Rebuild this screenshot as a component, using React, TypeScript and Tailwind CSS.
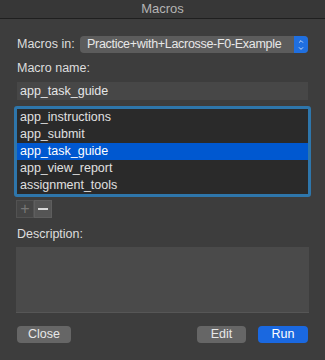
import { ChevronUp, ChevronDown } from "lucide-react";

const macros = ["app_instructions", "app_submit", "app_task_guide", "app_view_report", "assignment_tools"];

export default function App() {
  const selected = "app_task_guide";

  return (
    <div
      className="w-[325px] h-[360px] bg-[#3d3d3d] text-[12.5px] text-[#dedede] flex flex-col"
      style={{ fontFamily: '"Liberation Sans", Arial, sans-serif' }}
    >
      {/* title bar */}
      <div className="h-[19px] bg-[#373737] border-b border-[#1f1f1f] flex items-center justify-center text-[#b4b4b4] text-[13px]">
        Macros
      </div>

      <div className="flex flex-col px-[17px] pt-[17px]">
        {/* Macros in */}
        <div className="flex items-center h-[17px]">
          <span className="w-[63px]">Macros in:</span>
          <div className="flex-1 h-[17px] rounded-[4px] bg-[#5c5c5c] flex items-center overflow-hidden">
            <span className="flex-1 pl-[7px] text-[#e8e8e8] whitespace-nowrap tracking-[-0.3px]">
              Practice+with+Lacrosse-F0-Example
            </span>
            <div className="w-[14px] h-full bg-[#1f6fe0] flex flex-col items-center justify-center text-white">
              <ChevronUp className="w-[10px] h-[7px]" strokeWidth={2.5} />
              <ChevronDown className="w-[10px] h-[7px]" strokeWidth={2.5} />
            </div>
          </div>
        </div>

        <div className="mt-[8px] h-[15px] leading-[15px]">Macro name:</div>

        <div className="mt-[6px] h-[18px] bg-[#474747] flex items-center pl-[3px] text-[#e6e6e6]">app_task_guide</div>

        {/* list */}
        <div className="-mx-[3px] mt-[6px] border-[3px] border-[#2e76ab] rounded-[3px] bg-[#2a2a2a]">
          {macros.map((m) => (
            <div
              key={m}
              className={
                "h-[17px] flex items-center pl-[3px] " +
                (m === selected ? "bg-[#0058d0] text-white" : "text-[#e0e0e0]")
              }
            >
              {m}
            </div>
          ))}
        </div>

        {/* + / - */}
        <div className="mt-[3px] flex ml-[-1px]">
          <div className="w-[18px] h-[18px] bg-[#454545] border border-[#525252] flex items-center justify-center text-[#777] text-[16px] leading-none">
            +
          </div>
          <div className="w-[18px] h-[18px] bg-[#555555] border border-[#5e5e5e] flex items-center justify-center">
            <div className="w-[10px] h-[1.5px] bg-[#d8d8d8]" />
          </div>
        </div>

        <div className="mt-[9px] h-[15px] leading-[15px]">Description:</div>

        <div className="mt-[5px] h-[66px] bg-[#4a4a4a] border-b border-[#565656] -mx-[1px]" />

        {/* buttons */}
        <div className="mt-[13px] flex items-center">
          <button className="w-[54px] h-[17px] rounded-[4px] bg-[#666666] text-[#e8e8e8] leading-none">Close</button>
          <div className="flex-1" />
          <button className="w-[49px] h-[17px] rounded-[4px] bg-[#666666] text-[#e8e8e8] leading-none">Edit</button>
          <button className="ml-[12px] w-[50px] h-[17px] rounded-[4px] bg-[#1a68e0] text-white leading-none">Run</button>
        </div>
      </div>
    </div>
  );
}
